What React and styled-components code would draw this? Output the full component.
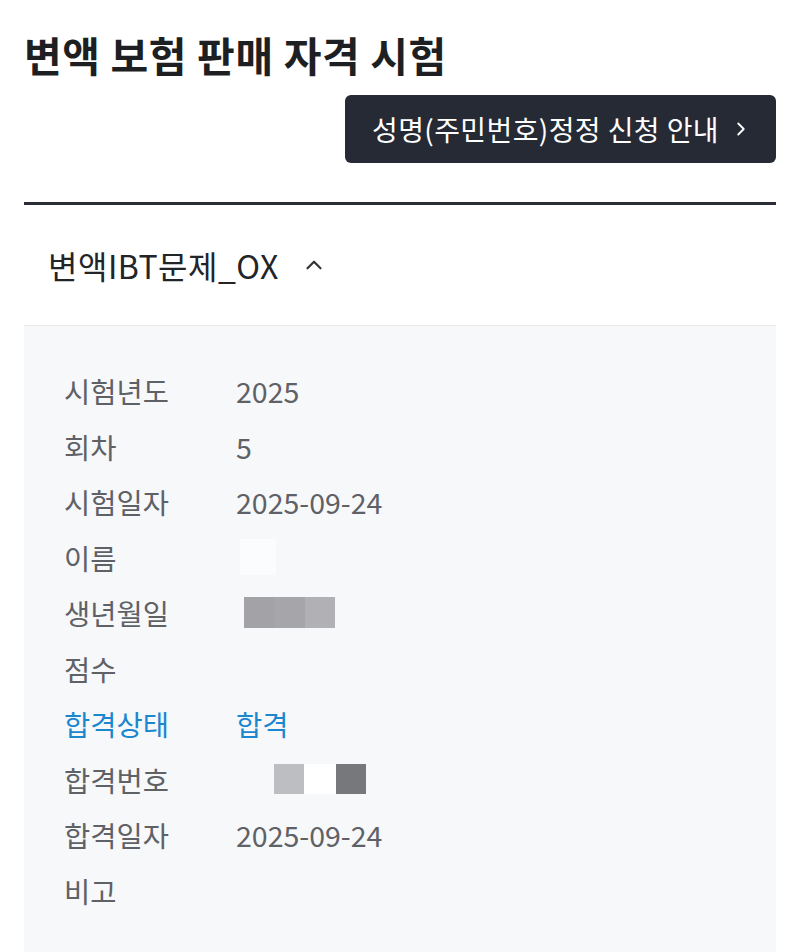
import React from 'react';
import styled, { createGlobalStyle } from 'styled-components';

const GlobalStyle = createGlobalStyle`
  html, body {
    margin: 0;
    padding: 0;
    background: #ffffff;
    font-family: "Noto Sans CJK KR", "Noto Sans", sans-serif;
  }
`;

const Page = styled.div`
  width: 800px;
  height: 952px;
  box-sizing: border-box;
  padding: 0 24px;
  overflow: hidden;
  background: #ffffff;
`;

const Title = styled.h1`
  margin: 0;
  padding-top: 27px;
  font-size: 41px;
  line-height: 55px;
  font-weight: 700;
  letter-spacing: 0.6px;
  color: #1d1f23;
`;

const ButtonRow = styled.div`
  display: flex;
  justify-content: flex-end;
  margin-top: 13px;
`;

const GuideButton = styled.button`
  display: flex;
  align-items: center;
  justify-content: space-between;
  height: 68px;
  width: 431px;
  box-sizing: border-box;
  padding: 0 24px 0 27px;
  border: none;
  border-radius: 6px;
  background: #252a35;
  color: #ffffff;
  font-family: inherit;
  font-size: 28px;
  letter-spacing: 0.4px;
  cursor: pointer;
`;

const Divider = styled.div`
  margin-top: 39px;
  height: 3px;
  background: #2a2d33;
`;

const AccordionHead = styled.div`
  display: flex;
  align-items: center;
  gap: 22px;
  height: 120px;
  padding-left: 24px;
  border-bottom: 1px solid #e8e9eb;
  font-size: 32px;
  letter-spacing: 0.5px;
  color: #222428;
`;

const Panel = styled.div`
  background: #f7f8fa;
  padding: 37px 40px 60px;
`;

const Row = styled.div`
  display: grid;
  grid-template-columns: 172px 1fr;
  align-items: center;
  height: 55.5px;
  font-size: 28.5px;
  color: ${({ $accent }) => ($accent ? '#1b87cf' : '#5e6166')};
`;

const Masks = styled.div`
  display: flex;
  align-items: center;
  margin-left: ${({ $offset }) => $offset}px;
`;

const Mask = styled.span`
  display: block;
  width: ${({ $w }) => $w}px;
  height: ${({ $h }) => $h}px;
  background: ${({ $c }) => $c};
`;

const Chevron = ({ dir, size, color, width = 2 }) => (
  <svg width={size} height={size} viewBox="0 0 24 24" fill="none" stroke={color} strokeWidth={width} strokeLinecap="round" strokeLinejoin="round">
    {dir === 'up' ? <path d="M6 15l6-6 6 6" /> : <path d="M9 6l6 6-6 6" />}
  </svg>
);

const rows = [
  { label: '시험년도', value: '2025' },
  { label: '회차', value: '5' },
  { label: '시험일자', value: '2025-09-24' },
  { label: '이름', masks: { offset: 4, items: [['#fbfcfd', 36, 36]] } },
  { label: '생년월일', masks: { offset: 8, items: [['#a2a2a7', 30, 31], ['#a6a6aa', 31, 31], ['#b1b1b5', 30, 31]] } },
  { label: '점수', value: '' },
  { label: '합격상태', value: '합격', accent: true },
  { label: '합격번호', masks: { offset: 38, items: [['#bdbec1', 30, 30], ['#ffffff', 32, 30], ['#76787c', 30, 30]] } },
  { label: '합격일자', value: '2025-09-24' },
  { label: '비고', value: '' },
];

export default function App() {
  return (
    <Page>
      <GlobalStyle />
      <Title>변액 보험 판매 자격 시험</Title>
      <ButtonRow>
        <GuideButton>
          성명(주민번호)정정 신청 안내
          <Chevron dir="right" size={22} color="#ffffff" />
        </GuideButton>
      </ButtonRow>
      <Divider />
      <AccordionHead>
        변액IBT문제_OX
        <Chevron dir="up" size={26} color="#333" />
      </AccordionHead>
      <Panel>
        {rows.map((r) => (
          <Row key={r.label} $accent={r.accent}>
            <span>{r.label}</span>
            {r.masks ? (
              <Masks $offset={r.masks.offset}>
                {r.masks.items.map(([c, w, h], i) => (
                  <Mask key={i} $c={c} $w={w} $h={h} />
                ))}
              </Masks>
            ) : (
              <span>{r.value}</span>
            )}
          </Row>
        ))}
      </Panel>
    </Page>
  );
}
